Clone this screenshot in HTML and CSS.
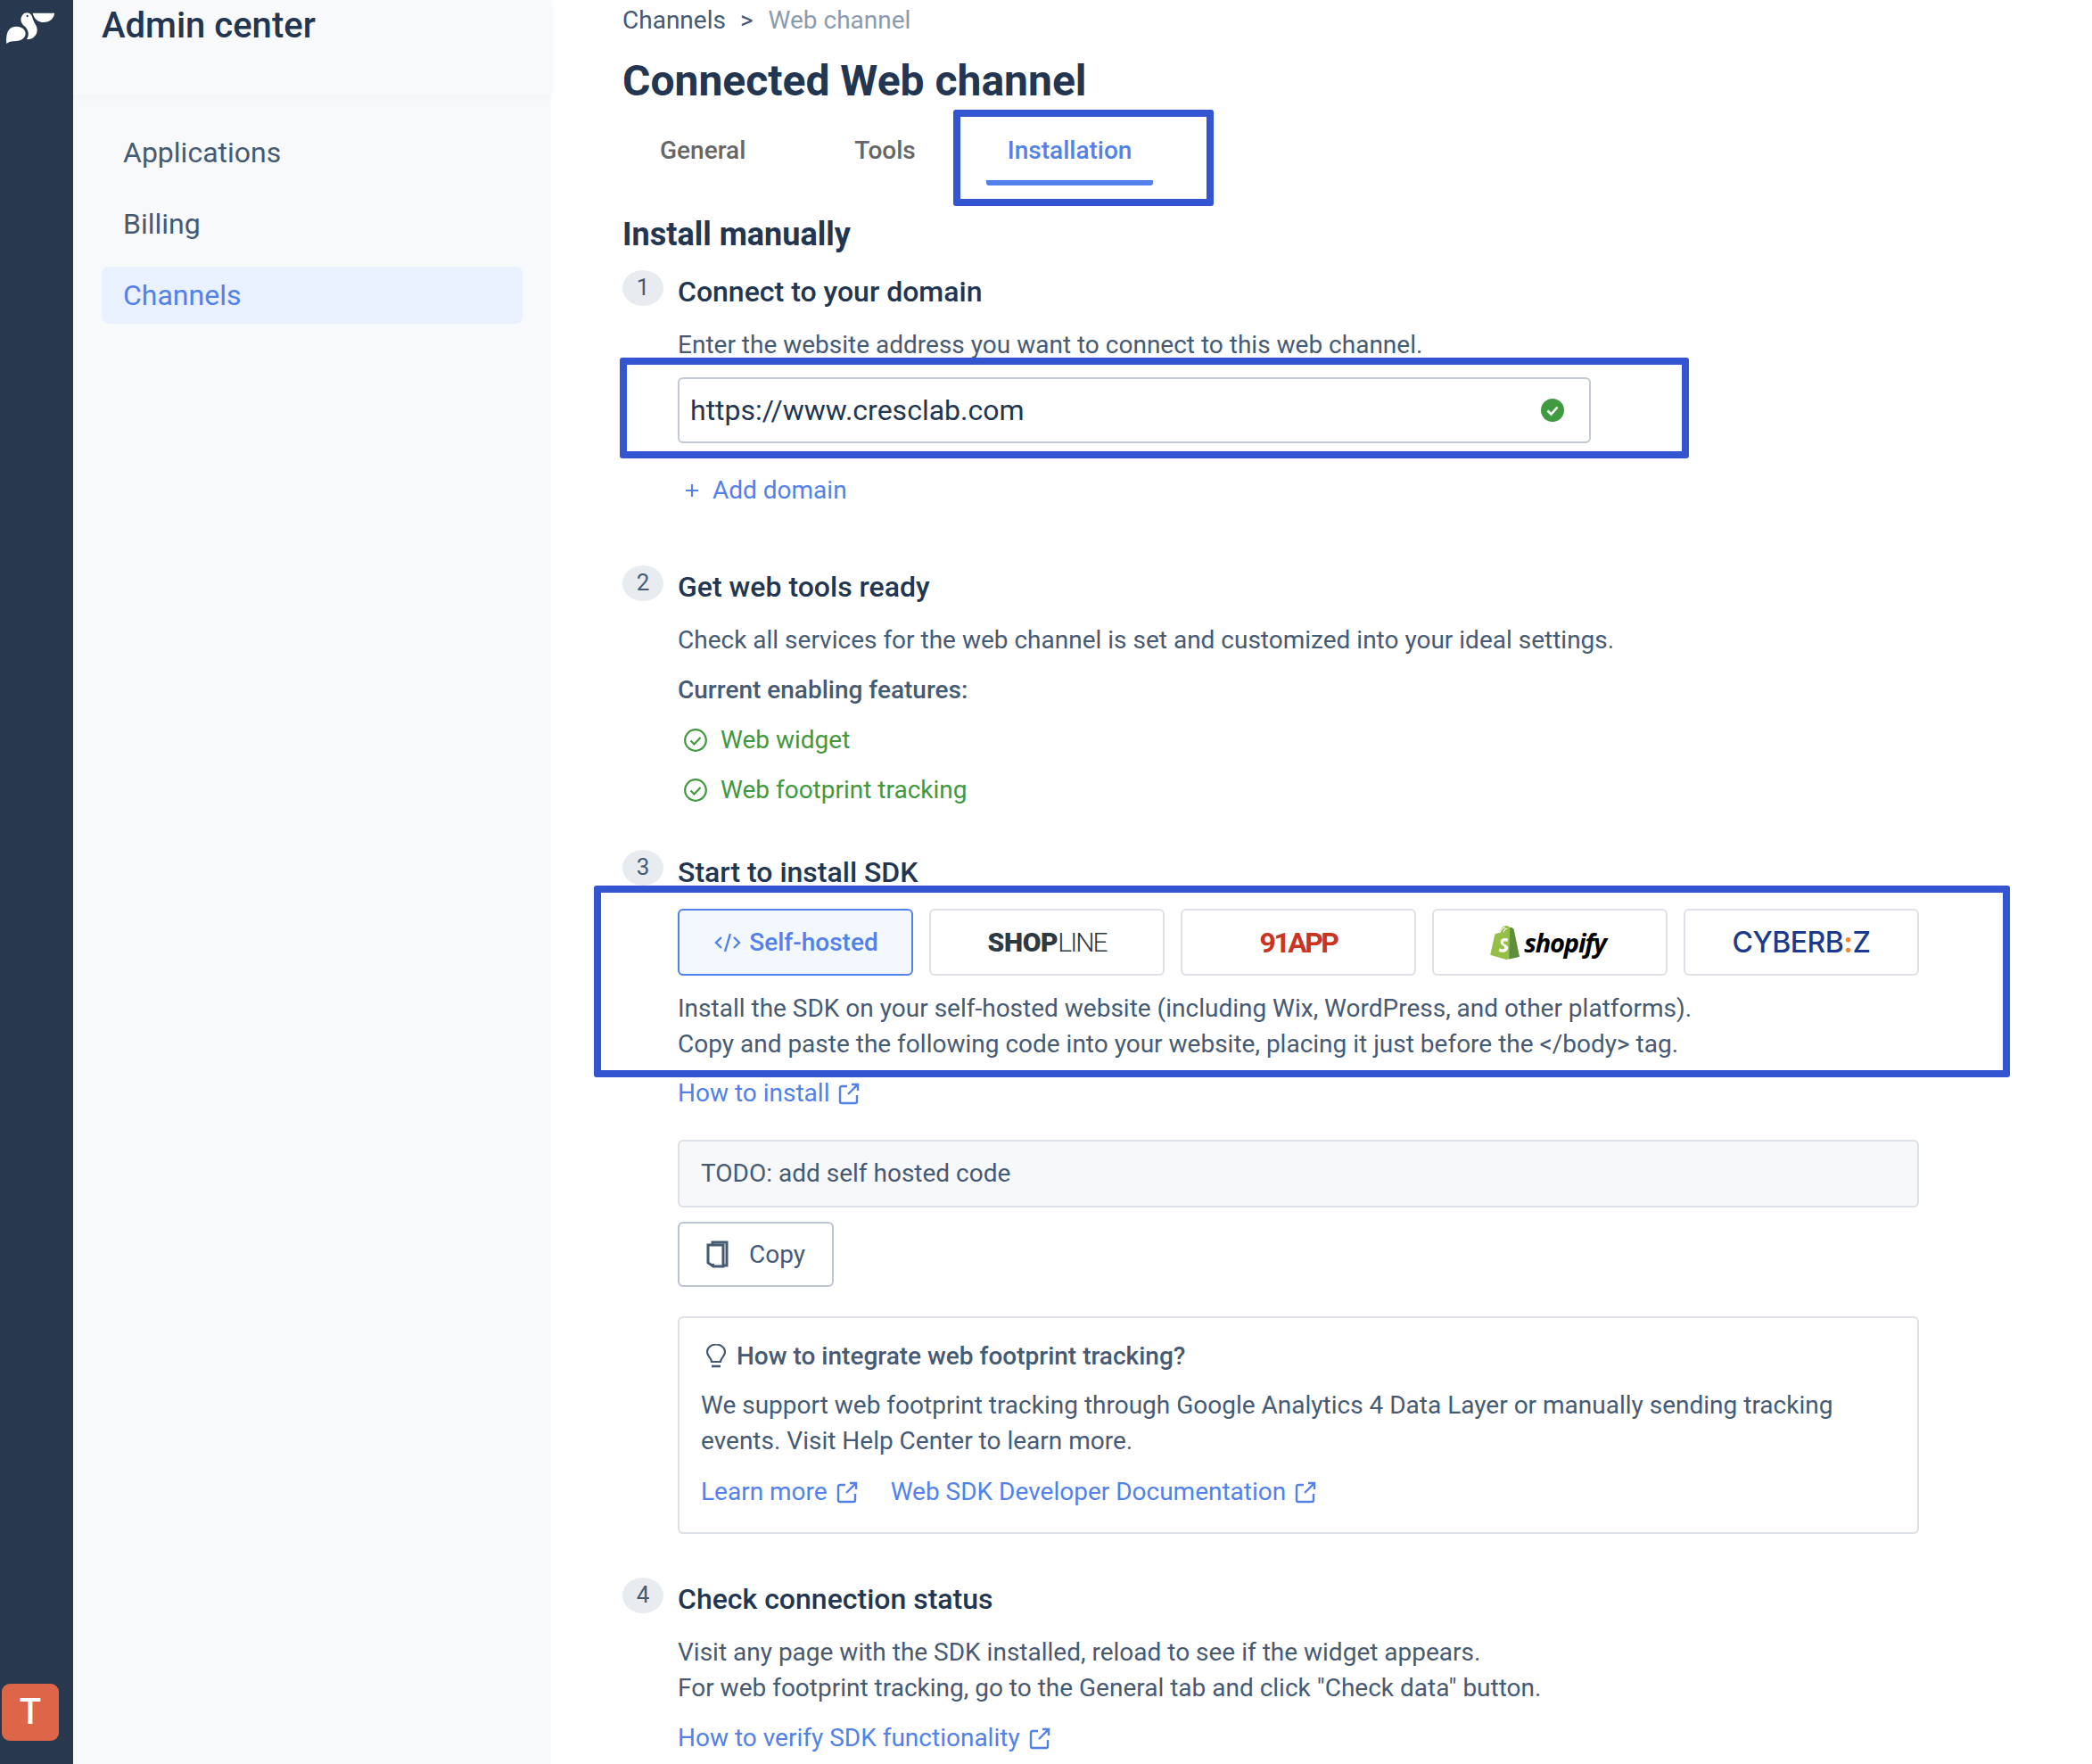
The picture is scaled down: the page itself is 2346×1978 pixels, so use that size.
FILE: index.html
```html
<!DOCTYPE html>
<html lang="en">
<head>
<meta charset="utf-8">
<title>Connected Web channel</title>
<link rel="stylesheet" href="styles.css">
</head>
<body>
<div class="app">
  <aside class="rail">
    <svg class="logo" viewBox="0 0 198 156"><path d="M22 147C20 125 22 100 40 92C58 84 85 92 86 112C86 128 72 138 55 138C42 138 30 140 22 147Z" fill="#fff"/><path d="M90 132C100 118 96 100 82 88C70 78 66 62 76 50C84 40 100 40 106 52C112 66 112 70 118 80C126 92 128 106 120 118C112 130 100 134 90 132Z" fill="#fff"/><path d="M110 44L183 44C183 60 168 75 146 75C128 75 114 62 110 44Z" fill="#fff"/><circle cx="92" cy="54" r="3.500" fill="#27384f"/></svg>
    <div class="avatar">T</div>
  </aside>
  <nav class="panel">
    <div class="panel-head">Admin center</div>
    <ul class="menu">
      <li class="menu-item">Applications</li>
      <li class="menu-item">Billing</li>
      <li class="menu-item active">Channels</li>
    </ul>
  </nav>
  <main class="main">
    <div class="crumb"><span>Channels</span><span class="crumb-sep">&gt;</span><span class="crumb-cur">Web channel</span></div>
    <h1 class="title">Connected Web channel</h1>
    <div class="tabs">
      <div class="tab">General</div>
      <div class="tab">Tools</div>
      <div class="tab tab-active">Installation</div>
    </div>
    <h2 class="section">Install manually</h2>

    <section class="step step-1">
      <div class="num">1</div>
      <div class="step-body">
        <h3 class="step-title">Connect to your domain</h3>
        <p class="text t-16">Enter the website address you want to connect to this web channel.</p>
        <div class="domain">
          <span class="domain-val">https://www.cresclab.com</span>
          <svg class="ok" viewBox="0 0 26 26"><circle cx="13" cy="13" r="13" fill="#3f9a40"/><path d="M7.5 13.5l4 4 7-8" fill="none" stroke="#fff" stroke-width="2.6"/></svg>
        </div>
        <div class="add"><svg class="plus" viewBox="0 0 16 16"><path d="M8 1v14M1 8h14" stroke="currentColor" stroke-width="2.1" fill="none"/></svg>Add domain</div>
      </div>
    </section>

    <section class="step step-2">
      <div class="num">2</div>
      <div class="step-body">
        <h3 class="step-title">Get web tools ready</h3>
        <p class="text t-16">Check all services for the web channel is set and customized into your ideal settings.</p>
        <p class="text strong t-16">Current enabling features:</p>
        <div class="feat t-16"><svg class="chk" viewBox="0 0 26 26"><circle cx="13" cy="13" r="11.800" fill="none" stroke="currentColor" stroke-width="2.2"/><path d="M7.5 13.5l4 4 7-7.500" fill="none" stroke="currentColor" stroke-width="2.2"/></svg>Web widget</div>
        <div class="feat t-16"><svg class="chk" viewBox="0 0 26 26"><circle cx="13" cy="13" r="11.800" fill="none" stroke="currentColor" stroke-width="2.2"/><path d="M7.5 13.5l4 4 7-7.500" fill="none" stroke="currentColor" stroke-width="2.2"/></svg>Web footprint tracking</div>
      </div>
    </section>

    <section class="step step-3">
      <div class="num">3</div>
      <div class="step-body">
        <h3 class="step-title title-low">Start to install SDK</h3>
        <div class="platforms">
          <div class="plat plat-on"><svg class="code" viewBox="0 0 30 24"><path d="M8 6l-6 6 6 6M22 6l6 6-6 6M18 2l-6 20" fill="none" stroke="currentColor" stroke-width="2.4"/></svg>Self-hosted</div>
          <div class="plat"><span class="l-shop">SHOP</span><span class="l-line">LINE</span></div>
          <div class="plat"><span class="l-91">91APP</span></div>
          <div class="plat plat-shopify"><svg class="bag" viewBox="0 0 32 36"><path d="M1 31L6 9L11 7C12 3 15 0 18 0C20 0 21 1 22 2L24 2L26 4L32 33L18 36Z" fill="#95bf47"/><path d="M22 2L24 2L26 4L32 33L21 35.500Z" fill="#5e8e3e"/><path d="M11 8C12 4 15 2 17 2M15 7C16 4 17 3 19 3" fill="none" stroke="#fff" stroke-width="1"/><path d="M20 14C17 12 11 14 12 18C12 21 17 21 16 24C15 26 13 25 11 24L10 27C13 29 19 29 20 24C20 20 15 20 15 18C15 16 17 16 19 17Z" fill="#fff"/></svg><span class="l-shopify">shopify</span></div>
          <div class="plat"><span class="l-cyber">CYBERB<b>:</b>Z</span></div>
        </div>
        <p class="text t-17">Install the SDK on your self-hosted website (including Wix, WordPress, and other platforms).<br>Copy and paste the following code into your website, placing it just before the &lt;/body&gt; tag.</p>
        <a class="link t-15"><span>How to install</span><svg class="ext" viewBox="0 0 25 25"><path d="M10 4H4a2 2 0 0 0-2 2v15a2 2 0 0 0 2 2h15a2 2 0 0 0 2-2v-7M11 13L22 2M15 2h7v7" fill="none" stroke="currentColor" stroke-width="2.4"/></svg></a>
        <div class="codebox">TODO: add self hosted code</div>
        <button class="copy"><svg class="copy-ic" viewBox="0 0 26 32"><path d="M8 5V2h16v26h-4" fill="none" stroke="currentColor" stroke-width="3"/><path d="M3 5h17v24H9l-6-4z" fill="none" stroke="currentColor" stroke-width="3"/><path d="M3 26h7v4z" fill="currentColor"/></svg>Copy</button>
        <div class="tip">
          <div class="tip-title"><svg class="bulb" viewBox="0 0 24 28"><path d="M7 20c0-4-5-6-5-11a10 8.500 0 0 1 20 0c0 5-5 7-5 11z" fill="none" stroke="currentColor" stroke-width="2.2"/><path d="M7 25h10" stroke="currentColor" stroke-width="2.6"/></svg>How to integrate web footprint tracking?</div>
          <p class="text t-15">We support web footprint tracking through Google Analytics 4 Data Layer or manually sending tracking events. Visit Help Center to learn more.</p>
          <div class="tip-links">
            <a class="link"><span>Learn more</span><svg class="ext" viewBox="0 0 25 25"><path d="M10 4H4a2 2 0 0 0-2 2v15a2 2 0 0 0 2 2h15a2 2 0 0 0 2-2v-7M11 13L22 2M15 2h7v7" fill="none" stroke="currentColor" stroke-width="2.4"/></svg></a>
            <a class="link"><span>Web SDK Developer Documentation</span><svg class="ext" viewBox="0 0 25 25"><path d="M10 4H4a2 2 0 0 0-2 2v15a2 2 0 0 0 2 2h15a2 2 0 0 0 2-2v-7M11 13L22 2M15 2h7v7" fill="none" stroke="currentColor" stroke-width="2.4"/></svg></a>
          </div>
        </div>
      </div>
    </section>

    <section class="step step-4">
      <div class="num">4</div>
      <div class="step-body">
        <h3 class="step-title">Check connection status</h3>
        <p class="text t-16">Visit any page with the SDK installed, reload to see if the widget appears.<br>For web footprint tracking, go to the General tab and click "Check data" button.</p>
        <a class="link t-16"><span>How to verify SDK functionality</span><svg class="ext" viewBox="0 0 25 25"><path d="M10 4H4a2 2 0 0 0-2 2v15a2 2 0 0 0 2 2h15a2 2 0 0 0 2-2v-7M11 13L22 2M15 2h7v7" fill="none" stroke="currentColor" stroke-width="2.4"/></svg></a>
      </div>
    </section>
  </main>
</div>
<div class="mark mark-tab"></div>
<div class="mark mark-domain"></div>
<div class="mark mark-sdk"></div>
</body>
</html>
```

FILE: styles.css
```css
* { box-sizing: border-box; }
html, body { margin: 0; padding: 0; }
body {
  position: relative;
  width: 2346px;
  height: 1978px;
  overflow: hidden;
  background: #fff;
  font-family: Roboto, "Liberation Sans", sans-serif;
  font-size: 28px;
  line-height: 40px;
  color: #475a73;
}
h1, h2, h3, p, ul { margin: 0; padding: 0; list-style: none; }

.app { display: flex; height: 1978px; }

.rail {
  flex: 0 0 82px;
  background: #27384f;
  display: flex;
  flex-direction: column;
  justify-content: space-between;
  padding: 0 0 26px 2px;
}
.logo { width: 66px; height: 52px; margin-left: -2px; }
.avatar {
  width: 64px;
  height: 64px;
  border-radius: 9px;
  background: #dd6548;
  color: #fff;
  font-size: 40px;
  font-weight: 500;
  line-height: 64px;
  text-align: center;
}

.panel {
  flex: 0 0 536px;
  background: #f8f9fb;
}
.panel-head {
  height: 107px;
  padding: 5px 0 0 32px;
  font-size: 40px;
  line-height: 48px;
  font-weight: 500;
  color: #223651;
  box-shadow: 0 2px 6px rgba(39, 56, 79, .04);
}
.menu { padding: 32px 32px 0; }
.menu-item {
  height: 64px;
  margin-bottom: 16px;
  padding: 0 24px;
  font-size: 32px;
  line-height: 64px;
  border-radius: 8px;
}
.menu-item.active { margin: 0; background: #e9f0fe; color: #5281ea; }

.main { flex: 1; padding: 3px 0 0 80px; min-width: 0; }

.crumb { display: flex; font-size: 28px; line-height: 40px; }
.crumb-sep { margin: 0 17px 0 16px; }
.crumb-cur { color: #8a9bb0; }

.title {
  margin-top: 16px;
  font-size: 48px;
  line-height: 64px;
  font-weight: 700;
  color: #223651;
}

.tabs { display: flex; gap: 38px; margin-top: 26px; }
.tab {
  padding: 0 42px 19px;
  font-weight: 500;
  color: #666;
}
.tab-active {
  margin-left: -1px;
  padding: 0 24px 13px;
  color: #5281ea;
  border-bottom: 6px solid #5281ea;
  border-radius: 0 0 3px 3px;
}

.section {
  margin-top: 31px;
  font-size: 36px;
  line-height: 48px;
  font-weight: 700;
  color: #223651;
}

.step { display: flex; gap: 16px; }
.step-1 { margin-top: 16px; }
.step-2 { margin-top: 64px; }
.step-3 { margin-top: 47px; }
.step-4 { margin-top: 49px; }
.num {
  flex: 0 0 46px;
  height: 40px;
  border-radius: 50%;
  background: #e8ecf1;
  text-align: center;
  font-size: 26px;
  line-height: 38px;
}
.step-body { width: 1392px; }
.step-title {
  font-size: 32px;
  line-height: 48px;
  font-weight: 500;
  color: #223651;
}
.title-low { margin-top: 1px; }
.t-15 { margin-top: 15px; }
.t-16 { margin-top: 16px; }
.t-17 { margin-top: 17px; }
.text.strong { font-weight: 500; }

.domain {
  display: flex;
  align-items: center;
  justify-content: space-between;
  width: 1024px;
  height: 74px;
  margin-top: 16px;
  padding: 0 28px 0 12px;
  border: 2px solid #c2c9d3;
  border-radius: 6px;
  font-size: 32px;
  color: #223651;
}
.ok { width: 26px; height: 26px; }
.add {
  display: flex;
  align-items: center;
  margin-top: 33px;
  padding-left: 8px;
  color: #5281ea;
}
.plus { width: 16px; height: 16px; margin-right: 15px; }

.feat { display: flex; align-items: center; gap: 15px; padding-left: 7px; color: #42983f; }
.chk { width: 26px; height: 26px; }

.platforms {
  display: grid;
  grid-template-columns: repeat(5, 1fr);
  gap: 18px;
  margin-top: 17px;
}
.plat {
  display: flex;
  align-items: center;
  justify-content: center;
  height: 75px;
  border: 2px solid #dde1e7;
  border-radius: 6px;
}
.plat-on {
  gap: 9px;
  padding-left: 2px;
  background: #f3f8fe;
  border-color: #5281ea;
  color: #5281ea;
  font-weight: 500;
}
.plat-shopify { padding-right: 5px; }
.code { width: 30px; height: 24px; }
.l-shop { font-size: 30px; font-weight: 900; color: #2e3a42; letter-spacing: -.3px; }
.l-line { font-size: 30px; font-weight: 300; color: #2e3a42; letter-spacing: -2px; }
.l-91 { font-size: 32px; font-weight: 700; color: #c93521; letter-spacing: -2.5px; }
.bag { width: 34px; height: 38px; margin-right: 5px; }
.l-shopify { font-family: "Open Sans", sans-serif; font-size: 29px; font-weight: 700; font-style: italic; color: #000; letter-spacing: -1.2px; }
.l-cyber { font-family: "Inter", sans-serif; font-size: 32px; font-weight: 500; color: #1c3a8c; letter-spacing: -.5px; }
.l-cyber b { color: #ee8a2e; font-weight: 700; }

.link { display: flex; align-items: center; gap: 10px; width: fit-content; color: #5281ea; }
.ext { width: 25px; height: 25px; }

.codebox {
  height: 76px;
  margin-top: 32px;
  padding: 0 24px;
  border: 2px solid #dde1e7;
  border-radius: 6px;
  background: #f7f8fa;
  line-height: 72px;
}
.copy {
  display: flex;
  align-items: center;
  gap: 23px;
  width: 175px;
  height: 73px;
  margin-top: 16px;
  padding: 0 0 0 29px;
  background: #fff;
  border: 2px solid #bcc4d0;
  border-radius: 6px;
  font: inherit;
  color: #475a73;
}
.copy-ic { width: 26px; height: 32px; }

.tip {
  height: 244px;
  margin-top: 33px;
  padding: 23px 24px 0;
  border: 2px solid #dde1e7;
  border-radius: 6px;
}
.tip-title { display: flex; align-items: center; gap: 11px; font-weight: 500; padding-left: 5px; }
.bulb { width: 24px; height: 28px; }
.tip-links { display: flex; gap: 36px; margin-top: 17px; }

.mark {
  position: absolute;
  border: 8px solid #3355d1;
  border-radius: 3px;
  pointer-events: none;
}
.mark-tab { left: 1069px; top: 123px; width: 292px; height: 108px; }
.mark-domain { left: 695px; top: 401px; width: 1199px; height: 113px; }
.mark-sdk { left: 666px; top: 993px; width: 1588px; height: 215px; }
```
